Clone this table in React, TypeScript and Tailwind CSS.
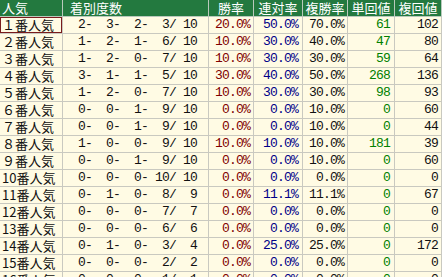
const rows: [string, number[], string, string, string, number, number][] = [
  ["１番人気", [2, 3, 2, 3, 10], "20.0%", "50.0%", "70.0%", 61, 102],
  ["２番人気", [1, 2, 1, 6, 10], "10.0%", "30.0%", "40.0%", 47, 80],
  ["３番人気", [1, 2, 0, 7, 10], "10.0%", "30.0%", "30.0%", 59, 64],
  ["４番人気", [3, 1, 1, 5, 10], "30.0%", "40.0%", "50.0%", 268, 136],
  ["５番人気", [1, 2, 0, 7, 10], "10.0%", "30.0%", "30.0%", 98, 93],
  ["６番人気", [0, 0, 1, 9, 10], "0.0%", "0.0%", "10.0%", 0, 60],
  ["７番人気", [0, 0, 1, 9, 10], "0.0%", "0.0%", "10.0%", 0, 44],
  ["８番人気", [1, 0, 0, 9, 10], "10.0%", "10.0%", "10.0%", 181, 39],
  ["９番人気", [0, 0, 1, 9, 10], "0.0%", "0.0%", "10.0%", 0, 60],
  ["10番人気", [0, 0, 0, 10, 10], "0.0%", "0.0%", "0.0%", 0, 0],
  ["11番人気", [0, 1, 0, 8, 9], "0.0%", "11.1%", "11.1%", 0, 67],
  ["12番人気", [0, 0, 0, 7, 7], "0.0%", "0.0%", "0.0%", 0, 0],
  ["13番人気", [0, 0, 0, 6, 6], "0.0%", "0.0%", "0.0%", 0, 0],
  ["14番人気", [0, 1, 0, 3, 4], "0.0%", "25.0%", "25.0%", 0, 172],
  ["15番人気", [0, 0, 0, 2, 2], "0.0%", "0.0%", "0.0%", 0, 0],
  ["16番人気", [0, 0, 0, 1, 1], "0.0%", "0.0%", "0.0%", 0, 0],
];

const jp = "font-['Noto_Sans_CJK_JP','Noto_Sans',sans-serif]";
const mono = "font-['Liberation_Mono',monospace] text-[13px] tracking-[-0.8px]";
const cell = "h-[17px] shrink-0 border-r border-b border-[#c9c9c0] flex items-center leading-[16px]";
const head = "h-[17px] shrink-0 border-r border-b border-[#b9c9bc] flex items-center justify-center text-white text-[13px] leading-[16px]";

function record(n: number[]) {
  const p = (v: number) => String(v).padStart(2, " ");
  return `${p(n[0])}- ${p(n[1])}- ${p(n[2])}- ${p(n[3])}/ ${p(n[4])}`;
}

export default function App() {
  return (
    <div className={`h-[277px] w-[444px] overflow-hidden bg-white ${jp}`}>
      <div className="w-[442px]">
        <div className="flex bg-[#23793f]">
          <div className={`${head} w-[63px] !justify-start pl-[2px]`}>人気</div>
          <div className={`${head} w-[146px] !justify-start pl-[7px]`}>着別度数</div>
          <div className={`${head} w-[45px]`}>勝率</div>
          <div className={`${head} w-[49px]`}>連対率</div>
          <div className={`${head} w-[45px]`}>複勝率</div>
          <div className={`${head} w-[47px]`}>単回値</div>
          <div className={`${head} w-[47px]`}>複回値</div>
        </div>
        {rows.map((r, i) => (
          <div key={i} className="flex bg-[#fffbe4] text-[#111]">
            <div
              className={`${cell} w-[63px] pl-[2px] text-[13px] ${
                i === 0 ? "shadow-[inset_0_0_0_1px_#7a1c1c]" : ""
              }`}
            >
              {r[0]}
            </div>
            <div className={`${cell} w-[146px] pl-[8px] whitespace-pre ${mono}`}>
              {record(r[1])}
            </div>
            <div className={`${cell} w-[45px] justify-end pr-[3px] text-[#800000] ${mono}`}>{r[2]}</div>
            <div className={`${cell} w-[49px] justify-end pr-[4px] text-[#000088] ${mono}`}>{r[3]}</div>
            <div className={`${cell} w-[45px] justify-end pr-[3px] ${mono}`}>{r[4]}</div>
            <div className={`${cell} w-[47px] justify-end pr-[4px] text-[#008000] ${mono}`}>{r[5]}</div>
            <div className={`${cell} w-[47px] justify-end pr-[3px] ${mono}`}>{r[6]}</div>
          </div>
        ))}
      </div>
    </div>
  );
}
